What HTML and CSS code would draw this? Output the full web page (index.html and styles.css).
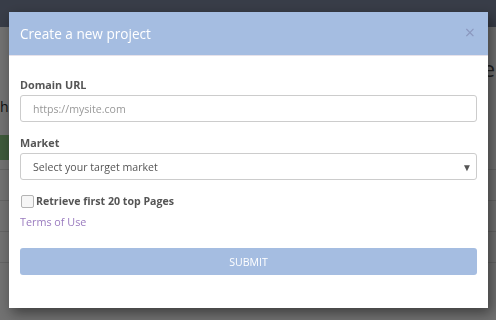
FILE: index.html
```html
<!DOCTYPE html>
<html lang="en">
<head>
  <meta charset="UTF-8">
  <title>Create a new project</title>
  <link rel="stylesheet" href="styles.css">
</head>
<body>

  <div class="page">
    <div class="navbar"></div>
    <div class="page-head">
      <h2 class="page-title">Projects Stage</h2>
    </div>
    <div class="crumb">hecked projects</div>
    <div class="toolbar">
      <span class="btn-green"></span>
    </div>
    <div class="table">
      <div class="row"></div>
      <div class="row"></div>
      <div class="row"></div>
      <div class="row row-last">
        <span class="cell-a">24</span>
        <span class="cell-b">20</span>
      </div>
    </div>
  </div>

  <div class="overlay">
    <div class="modal">
      <div class="modal-header">
        <h4 class="modal-title">Create a new project</h4>
        <span class="close">&times;</span>
      </div>
      <form class="modal-body">
        <label class="field-label" for="domain">Domain URL</label>
        <input class="field" type="text" id="domain" placeholder="https://mysite.com">

        <label class="field-label market-label" for="market">Market</label>
        <div class="select" id="market">
          <span>Select your target market</span>
          <span class="caret">&#9660;</span>
        </div>

        <div class="check-row">
          <span class="checkbox"></span>
          <span>Retrieve first 20 top Pages</span>
        </div>
        <a class="terms" href="#">Terms of Use</a>

        <button class="submit" type="button">SUBMIT</button>
      </form>
    </div>
  </div>

</body>
</html>
```

FILE: styles.css
```css
html, body {
  margin: 0;
  height: 100%;
  overflow: hidden;
}

body {
  font-family: 'Open Sans', 'Liberation Sans', sans-serif;
  background: #e2e2e2;
}

/* page behind the dialog */
.page {
  height: 320px;
  overflow: hidden;
  background: #e2e2e2;
}

.navbar {
  height: 27px;
  background: #717a90;
}

.page-head {
  display: flex;
  justify-content: flex-end;
  height: 70px;
  padding-right: 1px;
}

.page-title {
  margin: 26px 0 0;
  font-size: 22px;
  font-weight: 400;
  line-height: 30px;
  color: #444;
  white-space: nowrap;
}

.crumb {
  height: 38px;
  font-size: 14px;
  line-height: 20px;
  color: #222;
  white-space: nowrap;
}

.toolbar {
  height: 34px;
}

.btn-green {
  display: block;
  width: 90px;
  height: 25px;
  background: #7cb474;
}

.row {
  height: 30px;
  border-top: 1px solid #c8c8c8;
}

.row-last {
  display: flex;
  align-items: flex-end;
  height: 36px;
}

.cell-a,
.cell-b {
  font-size: 13px;
  line-height: 16px;
  color: #3a3f5a;
}

.cell-a {
  margin-left: 288px;
}

.cell-b {
  margin-left: 142px;
}

/* dialog */
.overlay {
  position: fixed;
  inset: 0;
  background: rgba(0, 0, 0, 0.5);
}

.modal {
  width: 479px;
  margin: 12px 0 0 9px;
  background: #fff;
  box-shadow: 3px 5px 12px rgba(0, 0, 0, 0.45);
}

.modal-header {
  display: flex;
  align-items: center;
  justify-content: space-between;
  height: 44px;
  padding: 0 13px 0 11px;
  background: #a5bde1;
  border-bottom: 1px solid #e6e2ea;
  box-sizing: border-box;
}

.modal-title {
  margin: 0;
  font-size: 13.6px;
  font-weight: 400;
  color: #fff;
}

.close {
  font-size: 18px;
  line-height: 1;
  color: #8b98bf;
  margin-top: -4px;
}

.modal-body {
  display: flex;
  flex-direction: column;
  align-items: flex-start;
  padding: 20px 11px 33px;
  margin: 0;
}

.field-label {
  font-size: 10.8px;
  font-weight: 700;
  line-height: 17px;
  color: #555;
  margin-bottom: 2px;
}

.market-label {
  margin-top: 12px;
}

.field,
.select {
  box-sizing: border-box;
  width: 100%;
  height: 27px;
  border: 1px solid #ccc;
  border-radius: 3px;
  padding: 0 12px;
  font-family: inherit;
  font-size: 10.6px;
  color: #555;
  background: #fff;
}

.field::placeholder {
  color: #999;
}

.select {
  display: flex;
  align-items: center;
  justify-content: space-between;
  padding-right: 4px;
}

.caret {
  font-size: 10px;
  color: #555;
}

.check-row {
  display: flex;
  align-items: center;
  gap: 2px;
  margin-top: 13px;
  font-size: 10.6px;
  font-weight: 700;
  color: #555;
  line-height: 17px;
}

.checkbox {
  width: 11px;
  height: 11px;
  margin-left: 1px;
  border: 1px solid #b4b4b4;
  border-radius: 2px;
  background: #f6f6f6;
}

.terms {
  margin-top: 3px;
  font-size: 10.8px;
  line-height: 17px;
  color: #9a7bbf;
  text-decoration: none;
}

.submit {
  width: 100%;
  height: 27px;
  margin-top: 18px;
  border: none;
  border-radius: 3px;
  background: #a5bde1;
  color: #fff;
  font-family: inherit;
  font-size: 10.6px;
  cursor: pointer;
}
```
